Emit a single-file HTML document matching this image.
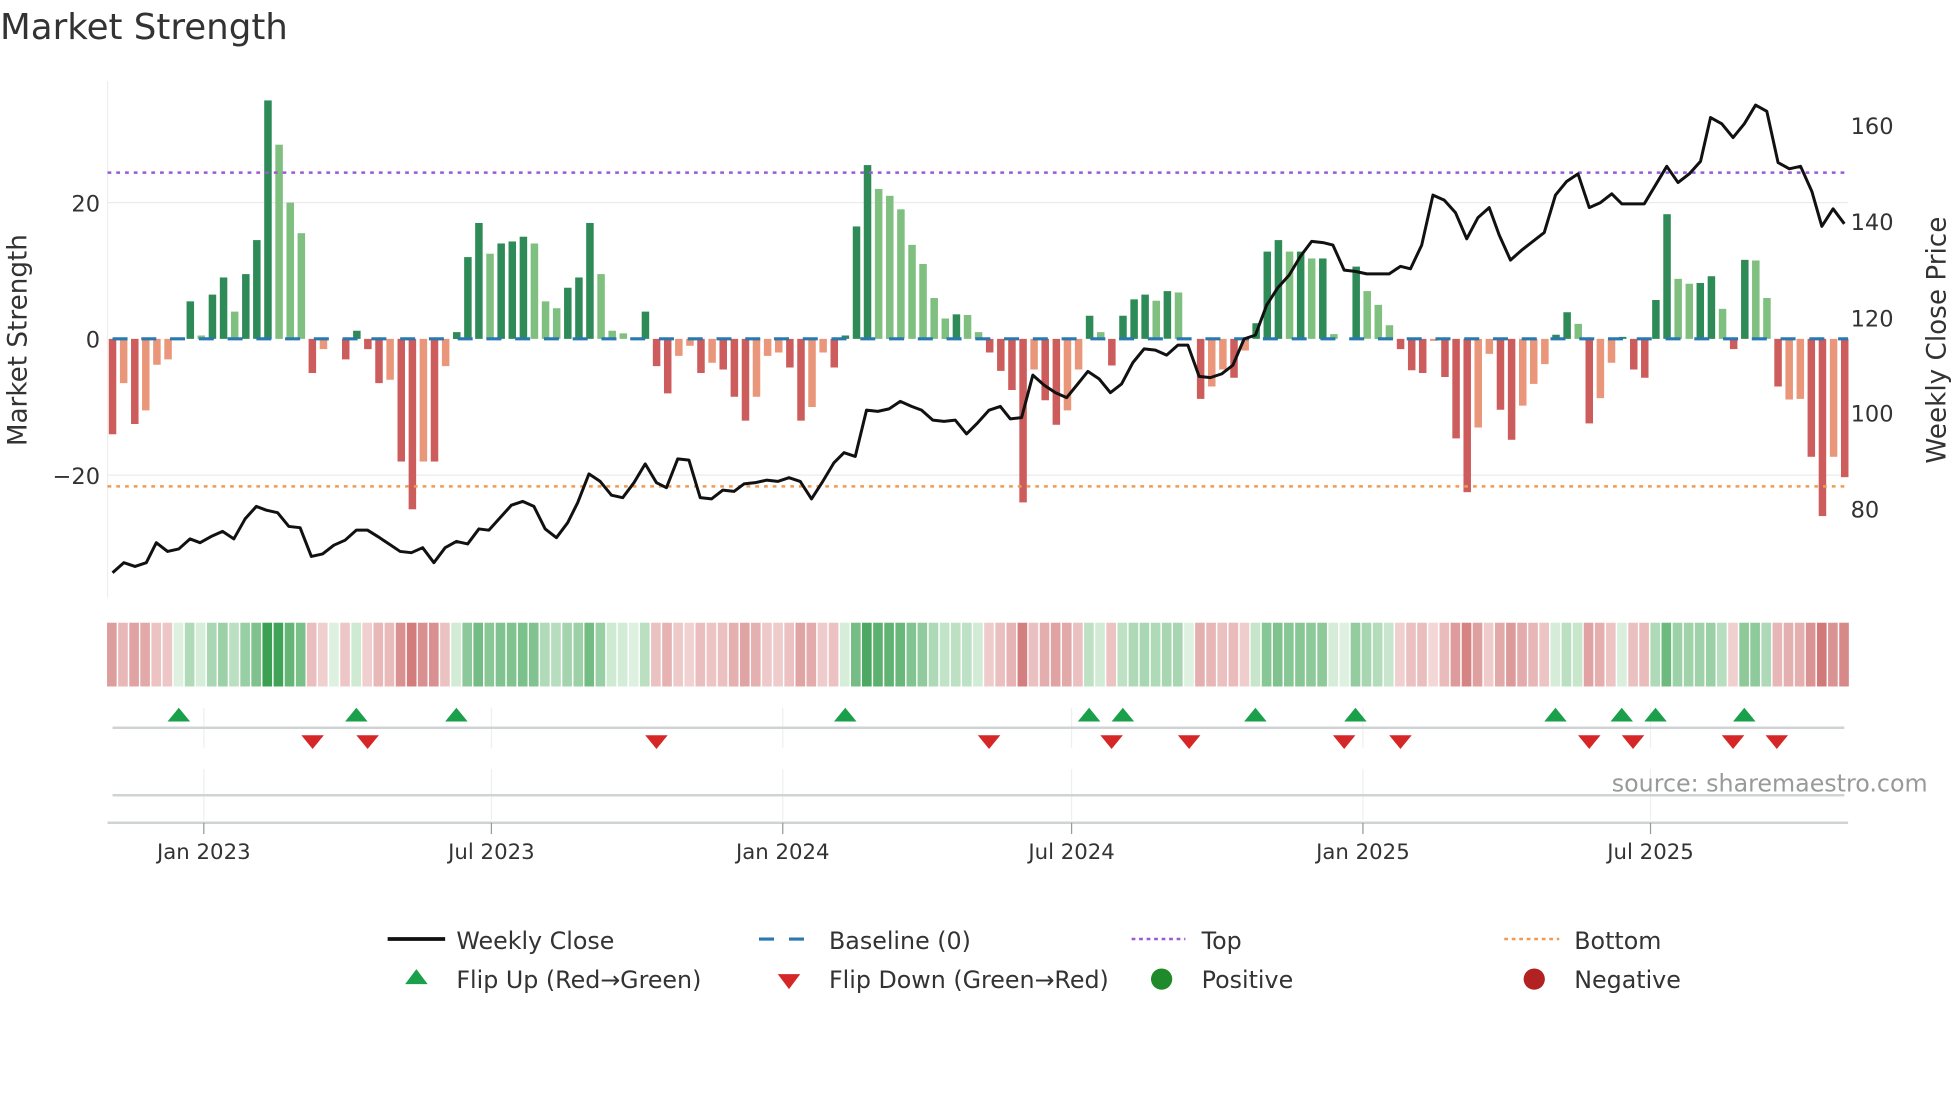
<!DOCTYPE html>
<html><head><meta charset="utf-8">
<style>
html,body{margin:0;padding:0;background:#fff;width:1960px;height:1102px;overflow:hidden}
svg{display:block}
text{font-family:"DejaVu Sans","Liberation Sans",sans-serif;fill:#333}
</style></head>
<body>
<svg id="s" width="1960" height="1102" viewBox="0 0 1567.5 881.3" xmlns="http://www.w3.org/2000/svg">
<rect width="1568" height="882" fill="#fff"/>
<text x="0" y="31" font-size="28.5">Market Strength</text>
<g stroke="#ebebeb" stroke-width="1">
<line x1="86" y1="162" x2="1478" y2="162"/>
<line x1="86" y1="380" x2="1478" y2="380"/>
</g>
<line x1="86" y1="65" x2="86" y2="478" stroke="#eee" stroke-width="1"/>
<g id="bars"></g>
<line x1="86" y1="138" x2="1478" y2="138" stroke="#9b59d6" stroke-width="2" stroke-dasharray="3,4"/>
<line x1="86" y1="389" x2="1478" y2="389" stroke="#ef9a55" stroke-width="2" stroke-dasharray="3,4"/>
<line x1="90" y1="271" x2="1478" y2="271" stroke="#2a78b0" stroke-width="2.5" stroke-dasharray="12,11"/>
<polyline id="price" fill="none" stroke="#111" stroke-width="2.4" stroke-linejoin="round"/>
<g font-size="18" text-anchor="end">
<text x="80" y="169">20</text><text x="80" y="278">0</text><text x="80" y="387">−20</text>
</g>
<g font-size="18">
<text x="1480" y="107">160</text><text x="1480" y="184">140</text><text x="1480" y="261">120</text><text x="1480" y="337">100</text><text x="1480" y="414">80</text>
</g>
<text font-size="21" transform="translate(21,272) rotate(-90)" text-anchor="middle">Market Strength</text>
<text font-size="21" transform="translate(1556,272) rotate(-90)" text-anchor="middle">Weekly Close Price</text>
<g id="strip"></g>
<g id="vgrid" stroke="#eef0f0" stroke-width="1"></g>
<line x1="90" y1="582" x2="1475" y2="582" stroke="#d0d3d4" stroke-width="2"/>
<line x1="90" y1="636" x2="1475" y2="636" stroke="#d0d3d4" stroke-width="2"/>
<line x1="86" y1="658" x2="1478" y2="658" stroke="#d0d3d4" stroke-width="2"/>
<g id="marks"></g>
<g id="ticks" stroke="#999" stroke-width="1"></g>
<g font-size="17" text-anchor="middle">
<text x="163" y="687">Jan 2023</text><text x="393" y="687">Jul 2023</text><text x="626" y="687">Jan 2024</text><text x="857" y="687">Jul 2024</text><text x="1090" y="687">Jan 2025</text><text x="1320" y="687">Jul 2025</text>
</g>
<text x="1289" y="633" font-size="19" style="fill:#999">source: sharemaestro.com</text>
<g font-size="19">
<line x1="310" y1="751" x2="356" y2="751" stroke="#111" stroke-width="3"/>
<text x="365" y="759">Weekly Close</text>
<line x1="607" y1="751" x2="650" y2="751" stroke="#2a78b0" stroke-width="2.5" stroke-dasharray="12,12"/>
<text x="663" y="759">Baseline (0)</text>
<line x1="905" y1="751" x2="948" y2="751" stroke="#9b59d6" stroke-width="2" stroke-dasharray="3,3"/>
<text x="961" y="759">Top</text>
<line x1="1203" y1="751" x2="1247" y2="751" stroke="#ef9a55" stroke-width="2" stroke-dasharray="3,3"/>
<text x="1259" y="759">Bottom</text>
<polygon points="324,787 342,787 333,775" fill="#1a9f4a"/>
<text x="365" y="790">Flip Up (Red→Green)</text>
<polygon points="622,779 640,779 631,791" fill="#d62728"/>
<text x="663" y="790">Flip Down (Green→Red)</text>
<circle cx="929" cy="783" r="8.5" fill="#1f8a2a"/>
<text x="961" y="790">Positive</text>
<circle cx="1227" cy="783" r="8.5" fill="#b22222"/>
<text x="1259" y="790">Negative</text>
</g>
</svg>
<script>
var V=[-14,-6.5,-12.5,-10.5,-3.8,-3,0,5.5,0.5,6.5,9,4,9.5,14.5,35,28.5,20,15.5,-5,-1.5,0,-3,1.2,-1.5,-6.5,-6,-18,-25,-18,-18,-4,1,12,17,12.5,14,14.3,15,14,5.5,4.5,7.5,9,17,9.5,1.2,0.8,0,4,-4,-8,-2.5,-1,-5,-3.5,-4.5,-8.5,-12,-8.5,-2.5,-2,-4.2,-12,-10,-2,-4.2,0.5,16.5,25.5,22,21,19,13.8,11,6,3,3.6,3.5,1,-2,-4.7,-7.5,-24,-4.5,-9,-12.6,-10.5,-4.5,3.4,1,-3.9,3.4,5.8,6.5,5.6,7,6.8,0,-8.8,-7,-4.5,-5.7,-1.7,2.3,12.8,14.5,12.8,12.8,11.8,11.8,0.7,0,10.6,7,5,2,-1.5,-4.6,-5,-0.3,-5.6,-14.6,-22.5,-13,-2.2,-10.4,-14.8,-9.8,-6.6,-3.7,0.6,3.9,2.2,-12.4,-8.7,-3.5,0.3,-4.5,-5.7,5.7,18.3,8.8,8.1,8.2,9.2,4.4,-1.5,11.6,11.5,6,-7,-8.9,-8.8,-17.3,-26,-17.3,-20.3];
var P=[[90,458],[99,450],[108,453],[117,450],[125,434],[134,441],[143,439],[152,431],[160,434],[169,429],[178,425],[187,431],[196,415],[205,405],[213,408],[222,410],[231,421],[240,422],[249,445],[258,443],[267,436],[276,432],[285,424],[294,424],[302,429],[311,435],[320,441],[329,442],[338,438],[347,450],[356,438],[365,433],[374,435],[383,423],[391,424],[400,414],[409,404],[418,401],[427,405],[436,423],[445,430],[454,418],[462,402],[471,379],[480,385],[489,396],[498,398],[507,386],[516,371],[525,386],[533,390],[542,367],[551,368],[560,398],[569,399],[578,392],[587,393],[595,387],[604,386],[613,384],[622,385],[631,382],[640,385],[649,399],[658,385],[667,370],[675,362],[684,365],[693,328],[702,329],[711,327],[720,321],[729,325],[737,328],[746,336],[755,337],[764,336],[773,347],[782,338],[791,328],[800,325],[808,335],[817,334],[826,300],[835,308],[844,314],[853,318],[862,307],[870,297],[879,303],[888,314],[897,307],[906,290],[915,279],[924,280],[933,284],[942,276],[950,276],[959,301],[968,302],[977,299],[986,292],[995,271],[1004,268],[1013,244],[1022,230],[1031,220],[1040,205],[1049,193],[1058,194],[1066,196],[1075,216],[1084,217],[1093,219],[1102,219],[1111,219],[1120,213],[1128,215],[1137,196],[1146,156],[1155,160],[1164,170],[1173,191],[1182,174],[1191,166],[1199,188],[1208,208],[1217,200],[1226,193],[1235,186],[1244,156],[1253,145],[1262,139],[1271,166],[1280,162],[1289,155],[1297,163],[1306,163],[1315,163],[1324,148],[1333,133],[1342,146],[1351,139],[1360,129],[1368,94],[1377,99],[1386,110],[1395,99],[1404,84],[1413,89],[1422,130],[1431,135],[1440,133],[1449,153],[1457,181],[1466,167],[1475,179]];
var NS="http://www.w3.org/2000/svg";
function el(p,t,a){var e=document.createElementNS(NS,t);for(var k in a)e.setAttribute(k,a[k]);document.getElementById(p).appendChild(e);return e;}
function mix(a,b,t){var r=[];for(var i=0;i<3;i++)r.push(Math.round(a[i]+(b[i]-a[i])*t));return "rgb("+r.join(",")+")";}
var W=8.88,X0=90;
for(var i=0;i<V.length;i++){
 var v=V[i],x=X0+i*W,prev=i?V[i-1]:0;
 var dark=(Math.abs(v)>=Math.abs(prev))||(v*prev<=0);
 if(i==151)dark=false;
 var col=v>=0?(dark?"#2e8b57":"#7fbf7f"):(dark?"#cd5c5c":"#e9967a");
 var h=Math.abs(v)*5.45;
 if(h>0.3) el("bars","rect",{x:(x-3).toFixed(1),y:(v>=0?271-h:271).toFixed(1),width:6,height:h.toFixed(1),fill:col});
 var t=Math.min(1,Math.pow(Math.abs(v)/30,0.75));
 var sc=v>=0?mix([222,241,224],[58,160,82],t):mix([244,218,218],[205,110,110],t);
 el("strip","rect",{x:(x-4.4).toFixed(1),y:498,width:(W-1.2).toFixed(1),height:51,fill:sc});
}
document.getElementById("price").setAttribute("points",P.map(function(p){return p.join(",")}).join(" "));
[163,393,626,857,1090,1320].forEach(function(x){
 el("vgrid","line",{x1:x,y1:566,x2:x,y2:598});
 el("vgrid","line",{x1:x,y1:615,x2:x,y2:656});
 el("ticks","line",{x1:x,y1:658,x2:x,y2:667});
});
[143,285,365,676,871,898,1004,1084,1244,1297,1324,1395].forEach(function(x){
 el("marks","polygon",{points:(x-9)+",577 "+(x+9)+",577 "+x+",566",fill:"#1a9f4a"});
});
[250,294,525,791,889,951,1075,1120,1271,1306,1386,1421].forEach(function(x){
 el("marks","polygon",{points:(x-9)+",588 "+(x+9)+",588 "+x+",599",fill:"#d62728"});
});
</script>
</body></html>
